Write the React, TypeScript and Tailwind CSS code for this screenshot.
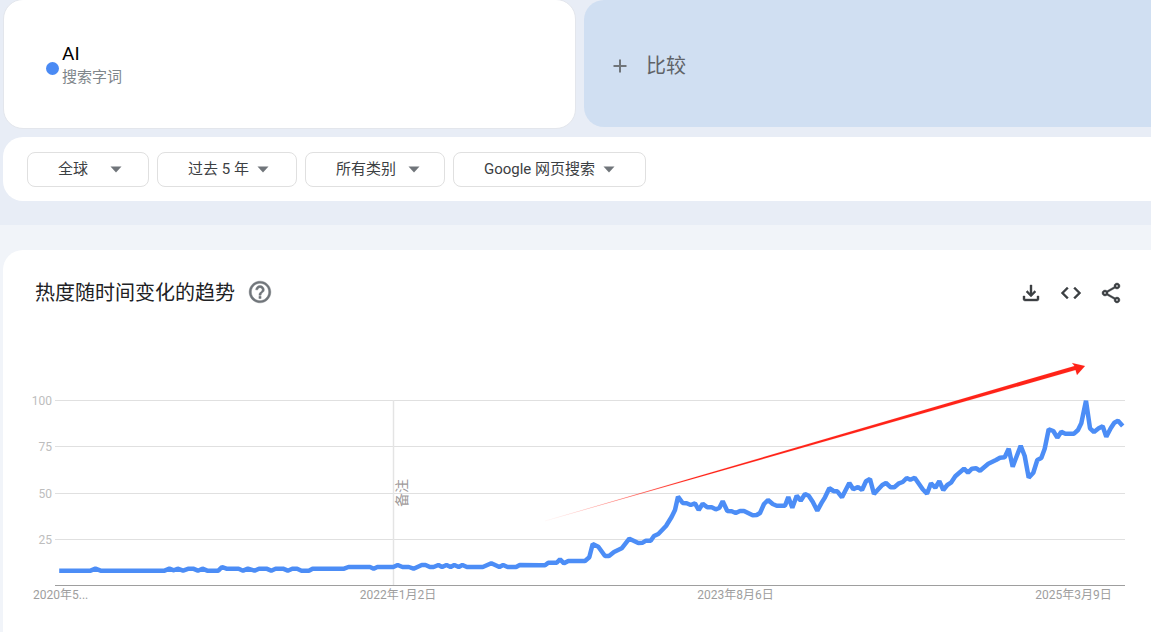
const z2 = [[160,572],[245,572],[258,566],[272,572],[445,572],[458,566],[470,571],[480,566],[495,572],[510,566],[522,566],[535,572],[547,566],[560,572],[590,572],[600,561],[612,566],[645,566],[657,572],[670,566],[688,572],[700,566],[720,566],[733,572],[745,566],[765,566],[778,572],[790,566],[803,566],[815,572],[835,572],[845,566],[930,566],[942,561],[1000,561],[1010,566],[1020,561],[1063,561],[1075,555],[1088,561],[1105,561],[1118,566],[1140,555],[1150,555],[1162,561],[1172,561],[1185,555],[1195,561],[1207,555],[1218,561],[1228,555],[1240,561],[1250,555],[1262,561],[1305,561],[1328,550],[1350,561],[1360,555],[1372,561],[1395,561],[1405,555]];
const z3 = [[0,646],[15,646],[25,638],[50,638],[60,628],[72,640],[85,633],[135,633],[148,622],[158,582],[175,590],[195,618],[207,618],[222,606],[245,595],[268,566],[295,579],[308,578],[318,572],[332,572],[342,558],[355,552],[378,528],[395,500],[405,480],[414,440],[428,459],[440,460],[452,465],[465,460],[476,480],[488,461],[502,472],[515,472],[527,478],[538,474],[548,454],[562,483],[575,484],[587,489],[600,483],[612,483],[638,496],[650,495],[660,489],[672,462],[684,450],[698,462],[710,467],[735,467],[745,441],[757,473],[770,437],[782,452],[795,432],[806,437],[818,455],[832,482],[845,458],[855,442],[868,415],[880,422]];
const z4 = [[0,418],[12,424],[22,424],[36,442],[58,399],[70,418],[84,411],[96,420],[108,394],[120,387],[132,432],[145,418],[157,405],[168,399],[182,412],[193,412],[207,400],[218,396],[230,384],[241,389],[254,383],[278,418],[291,431],[303,400],[316,413],[328,394],[340,420],[352,405],[363,398],[376,379],[402,356],[414,368],[426,356],[438,355],[450,362],[475,341],[498,330],[510,323],[524,322],[536,296],[548,350],[572,287],[584,318],[596,383],[610,368],[622,330],[634,324],[644,296],[656,238],[670,243],[682,263],[694,245],[706,251],[732,251],[744,240],[754,220],[768,152],[780,235],[792,246],[806,235],[818,229],[829,260],[842,235],[853,218],[864,212],[878,228]];

const points = [
  ...z2.map(([x, y]) => [x / 2.703, 380 + y / 3]),
  ...z3.map(([x, y]) => [540 + x / 3, 350 + y / 3]),
  ...z4.map(([x, y]) => [830 + x / 3, 350 + y / 3]),
]
  .map(([x, y]) => `${x.toFixed(1)},${y.toFixed(1)}`)
  .join(" ");

const font = { fontFamily: "Roboto, 'Noto Sans CJK SC', sans-serif" };

function Filter({ label, width, gap }: { label: string; width: string; gap: string }) {
  return (
    <div className={`flex h-[35px] items-center justify-center rounded-[8px] border border-[#e0e0e0] bg-white text-[15px] text-[#3c4043] ${width} ${gap}`}>
      <span className="whitespace-nowrap">{label}</span>
      <svg width="12" height="7" viewBox="0 0 12 7" className="shrink-0">
        <path d="M0.5 0.5h11L6 6.5z" fill="#70757a" />
      </svg>
    </div>
  );
}

function Icon({ d }: { d: string }) {
  return (
    <svg width="24" height="24" viewBox="0 0 24 24" fill="#3c4043" stroke="#3c4043" strokeWidth="0.4">
      <path d={d} />
    </svg>
  );
}

export default function App() {
  return (
    <div className="flex h-[632px] w-full flex-col overflow-hidden bg-[#e8edf6]" style={font}>
      <div className="flex h-[128px] shrink-0 gap-[8px] pl-[3px]">
        <div className="-mt-px flex h-[130px] w-[573px] items-center rounded-[20px] border border-[#e3e6ec] bg-white pl-[42px]">
          <span className="mt-[9px] h-[13px] w-[13px] rounded-full bg-[#4a8af4]" />
          <div className="mt-[2px] ml-[3px] flex flex-col">
            <span className="text-[19px] leading-[24px] text-black">AI</span>
            <span className="text-[15px] leading-[22px] text-[#80868b]">搜索字词</span>
          </div>
        </div>
        <div className="flex h-[127px] flex-1 items-center gap-[17px] rounded-l-[20px] bg-[#d0dff2] pt-[4px] pl-[27px] text-[20px] text-[#5f6368]">
          <svg width="18" height="18" viewBox="0 0 18 18" fill="none" stroke="#70757a" strokeWidth="2">
            <path d="M9 2.5v13M2.500 9h13" />
          </svg>
          <span>比较</span>
        </div>
      </div>

      <div className="mt-[9px] ml-[3px] flex h-[64px] shrink-0 items-start gap-2 rounded-l-[20px] bg-white pt-[15px] pl-[24px]">
        <Filter label="全球" width="w-[122px] pl-[4px]" gap="gap-[22px]" />
        <Filter label="过去 5 年" width="w-[140px] pl-[3px]" gap="gap-[8px]" />
        <Filter label="所有类别" width="w-[140px] pl-[6px]" gap="gap-[12px]" />
        <Filter label="Google 网页搜索" width="w-[193px]" gap="gap-[8px]" />
      </div>

      <div className="mt-[24px] flex-1 bg-[#f1f4f9] pt-[25px] pl-[3px]">
        <div className="h-[400px] rounded-l-[20px] bg-white">
          <div className="flex h-[84px] items-start pt-[30px] pr-[28px] pl-[32px]">
            <h2 className="text-[20px] leading-[26px] font-normal text-[#202124]">热度随时间变化的趋势</h2>
            <svg width="26" height="26" viewBox="0 0 24 24" fill="#70757a" stroke="#70757a" strokeWidth="0.4" className="ml-[12px] -mt-[1px]">
              <path d="M11 18h2v-2h-2v2zm1-16C6.480 2 2 6.480 2 12s4.480 10 10 10 10-4.480 10-10S17.520 2 12 2zm0 18c-4.410 0-8-3.590-8-8s3.590-8 8-8 8 3.590 8 8-3.590 8-8 8zm0-14c-2.210 0-4 1.790-4 4h2c0-1.100.9-2 2-2s2 .9 2 2c0 2-3 1.750-3 5h2c0-2.250 3-2.500 3-5 0-2.210-1.790-4-4-4z" />
            </svg>
            <div className="ml-auto flex gap-[16px] pt-[1px]">
              <Icon d="M18 15v3H6v-3H4v3c0 1.100.9 2 2 2h12c1.100 0 2-.9 2-2v-3h-2zm-1-4-1.410-1.410L13 12.170V4h-2v8.170L8.410 9.590 7 11l5 5 5-5z" />
              <Icon d="M9.400 16.600L4.800 12l4.600-4.600L8 6l-6 6 6 6 1.400-1.400zm5.200 0l4.600-4.600-4.600-4.600L16 6l6 6-6 6-1.400-1.400z" />
              <Icon d="M18 16.080c-.76 0-1.440.3-1.960.77L8.910 12.700c.05-.23.09-.46.09-.7s-.04-.47-.09-.7l7.050-4.110c.54.5 1.250.81 2.040.81 1.660 0 3-1.340 3-3s-1.340-3-3-3-3 1.340-3 3c0 .24.04.47.09.7L8.040 9.810C7.500 9.310 6.790 9 6 9c-1.660 0-3 1.340-3 3s1.340 3 3 3c.79 0 1.500-.31 2.040-.81l7.120 4.160c-.05.21-.08.43-.08.65 0 1.610 1.310 2.920 2.920 2.920 1.610 0 2.920-1.310 2.920-2.920s-1.310-2.920-2.920-2.920zM18 4c.55 0 1 .45 1 1s-.45 1-1 1-1-.45-1-1 .45-1 1-1zM6 13c-.55 0-1-.45-1-1s.45-1 1-1 1 .45 1 1-.45 1-1 1zm12 7.020c-.55 0-1-.45-1-1s.45-1 1-1 1 .45 1 1-.45 1-1 1z" />
            </div>
          </div>
          <svg width="1148" height="298" viewBox="3 334 1148 298" className="block">
            <defs>
              <linearGradient id="tail" gradientUnits="userSpaceOnUse" x1="545" y1="521" x2="690" y2="479">
                <stop offset="0" stopColor="#ff2318" stopOpacity="0.15" />
                <stop offset="1" stopColor="#ff2318" />
              </linearGradient>
            </defs>
            {[400, 446, 493, 539].map((y) => (
              <line key={y} x1="55" x2="1125" y1={y + 0.5} y2={y + 0.5} stroke="#e0e0e0" />
            ))}
            <line x1="393.500" x2="393.500" y1="400" y2="585" stroke="#e4e4e4" strokeWidth="1.500" />
            <line x1="55" x2="1125" y1="585.500" y2="585.500" stroke="#9e9e9e" />
            {[["100", 405], ["75", 451], ["50", 498], ["25", 544]].map(([t, y]) => (
              <text key={t} x="52" y={y} textAnchor="end" fontSize="12" fill="#bdbdbd">{t}</text>
            ))}
            <text x="33" y="599" fontSize="12" fill="#9e9e9e">2020年5...</text>
            <text x="398" y="599" textAnchor="middle" fontSize="12" fill="#9e9e9e">2022年1月2日</text>
            <text x="735.500" y="599" textAnchor="middle" fontSize="12" fill="#9e9e9e">2023年8月6日</text>
            <text x="1073.500" y="599" textAnchor="middle" fontSize="12" fill="#9e9e9e">2025年3月9日</text>
            <text transform="translate(407 507) rotate(-90)" fontSize="14" fill="#a09a9a">备注</text>
            <polygon points="545,521 1074.500,366 1072,363 1085,366 1077,375 1075.500,370" fill="url(#tail)" stroke="url(#tail)" strokeWidth="0.1" />
            <polyline points={points} fill="none" stroke="#4c8df6" strokeWidth="4.5" strokeLinejoin="bevel" />
          </svg>
        </div>
      </div>
    </div>
  );
}
